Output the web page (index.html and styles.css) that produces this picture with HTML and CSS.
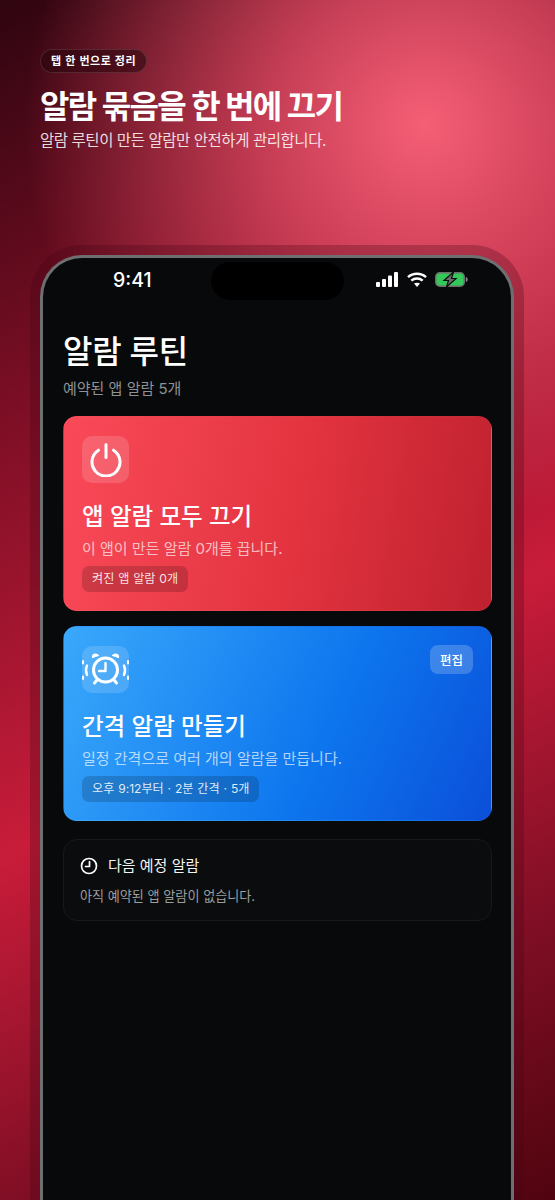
FILE: index.html
```html
<!DOCTYPE html>
<html lang="ko">
<head>
  <meta charset="UTF-8">
  <meta name="viewport" content="width=device-width, initial-scale=1.0">
  <title>알람 루틴</title>
  <link rel="stylesheet" href="styles.css">
</head>
<body>

<div class="screen">
  <header class="promo">
    <span class="promo-pill">탭 한 번으로 정리</span>
    <h1>알람 묶음을 한 번에 끄기</h1>
    <p>알람 루틴이 만든 알람만 안전하게 관리합니다.</p>
  </header>

  <div class="phone">
    <div class="island"></div>

    <div class="status-bar">
      <span class="time">9:41</span>
      <div class="status-icons">
        <svg width="23" height="15" viewBox="0 0 23 15" fill="#fff">
          <rect x="0" y="10" width="4" height="5" rx="1"/>
          <rect x="6" y="7" width="4" height="8" rx="1"/>
          <rect x="12" y="3.500" width="4" height="11.500" rx="1"/>
          <rect x="18" y="0" width="4" height="15" rx="1"/>
        </svg>
        <svg width="20" height="15" viewBox="0 0 20 15" fill="none" stroke="#fff" stroke-width="2.400">
          <path d="M1 5.200C6 .6 14 .6 19 5.200"/>
          <path d="M4.300 8.600C7.500 5.800 12.500 5.800 15.700 8.600"/>
          <path d="M10 15l-3-3.400c1.800-1.300 4.200-1.300 6 0z" fill="#fff" stroke="none"/>
        </svg>
        <svg width="33" height="15" viewBox="0 0 33 15">
          <rect x=".75" y=".75" width="28.500" height="13.500" rx="4" fill="#34c759" stroke="#6a6f6b" stroke-width="1.500"/>
          <path d="M30.800 5v5c1.300-.3 1.900-1.300 1.900-2.500s-.6-2.200-1.900-2.500z" fill="#8a8d8b"/>
          <path d="M18.500 0 9 8.500h4.500L11.500 15l9.500-8.500h-4.500z" fill="#6a6d6b" stroke="#0a0c0d" stroke-width="1.200"/>
        </svg>
      </div>
    </div>

    <div class="app">
      <h2 class="app-title">알람 루틴</h2>
      <p class="app-sub">예약된 앱 알람 5개</p>

      <section class="card card-red">
        <div class="card-top">
          <div class="card-icon">
            <svg width="34" height="34" viewBox="0 0 34 34" fill="none" stroke="#fff" stroke-width="3" stroke-linecap="round">
              <path d="M9.500 7.200a14 14 0 1 0 15 0"/>
              <path d="M17 1.500v13"/>
            </svg>
          </div>
        </div>
        <h3>앱 알람 모두 끄기</h3>
        <p>이 앱이 만든 알람 0개를 끕니다.</p>
        <span class="card-tag">켜진 앱 알람 0개</span>
      </section>

      <section class="card card-blue">
        <div class="card-top">
          <div class="card-icon">
            <svg width="47" height="47" viewBox="0 0 47 47" fill="none" stroke="#fff" stroke-width="3" stroke-linecap="round" stroke-linejoin="round">
              <circle cx="23.500" cy="24" r="12"/>
              <path d="M23.500 17v8h-6.500" stroke-width="2.400"/>
              <path d="M10.500 11.500c-.4-2 1-3.500 3-3.500 1.300 0 2.300.5 3 1.500z" fill="#fff" stroke-width="1.200"/>
              <path d="M36.500 11.500c.4-2-1-3.500-3-3.500-1.300 0-2.300.5-3 1.500z" fill="#fff" stroke-width="1.200"/>
              <path d="M15 34l-2.500 3M32 34l2.500 3"/>
              <path d="M5 19.500c-1.300 3-1.300 6.500 0 9.500M42 19.500c1.300 3 1.300 6.500 0 9.500" stroke-width="2.400"/>
              <path d="M1 15v2.500M1 30.500V33M46 15v2.500M46 30.500V33" stroke-width="2"/>
            </svg>
          </div>
          <button class="edit-btn">편집</button>
        </div>
        <h3>간격 알람 만들기</h3>
        <p>일정 간격으로 여러 개의 알람을 만듭니다.</p>
        <span class="card-tag">오후 9:12부터 · 2분 간격 · 5개</span>
      </section>

      <section class="next">
        <div class="next-head">
          <svg width="18" height="18" viewBox="0 0 18 18" fill="none" stroke="#fff" stroke-width="1.700" stroke-linecap="round" stroke-linejoin="round">
            <circle cx="9" cy="9" r="7.500"/>
            <path d="M9.500 4.500v5h-4"/>
          </svg>
          <span>다음 예정 알람</span>
        </div>
        <p>아직 예약된 앱 알람이 없습니다.</p>
      </section>
    </div>
  </div>
</div>

</body>
</html>
```

FILE: styles.css
```css
* {
  box-sizing: border-box;
}

html, body {
  margin: 0;
  padding: 0;
}

body {
  font-family: Inter, "Noto Sans CJK KR", "Noto Sans", sans-serif;
  background-color: #7a0a1f;
}

.screen {
  width: 555px;
  height: 1200px;
  overflow: hidden;
  padding: 49px 0 0 40px;
  background:
    radial-gradient(circle 400px at 425px 125px, rgba(245, 95, 118, 1) 0%, rgba(235, 80, 105, 0.72) 40%, rgba(200, 40, 70, 0) 100%),
    linear-gradient(152deg, #2f0510 0%, #7a0e24 27%, #c81c3a 57.500%, #820f25 80%, #50040f 100%);
}

.promo {
  display: flex;
  flex-direction: column;
  align-items: flex-start;
}

.promo-pill {
  height: 24px;
  padding: 0 10px;
  border: 1px solid rgba(255, 255, 255, 0.12);
  border-radius: 12px;
  background-color: rgba(40, 5, 12, 0.55);
  color: #fff;
  font-family: "Noto Sans CJK KR", sans-serif;
  font-size: 11px;
  font-weight: 700;
  line-height: 21px;
  letter-spacing: 0.500px;
}

.promo h1 {
  margin: 11px 0 0;
  color: #fff;
  font-size: 32px;
  font-weight: 700;
  line-height: 46px;
  letter-spacing: -1.600px;
}

.promo p {
  margin: -1px 0 0;
  color: rgba(255, 255, 255, 0.85);
  font-size: 15.500px;
  line-height: 24px;
  letter-spacing: -0.450px;
}

.phone {
  position: relative;
  width: 474px;
  height: 1000px;
  margin-top: 102px;
  border: 3px solid #6d6f70;
  border-bottom: none;
  border-radius: 42px 42px 0 0;
  background-color: #07090b;
  box-shadow: 0 0 0 10px rgba(70, 5, 20, 0.28);
}

.island {
  position: absolute;
  top: 4px;
  left: 168px;
  width: 133px;
  height: 38px;
  border-radius: 19px;
  background-color: #000;
}

.status-bar {
  display: flex;
  justify-content: space-between;
  align-items: center;
  height: 40px;
  padding: 3px 43px 0 70px;
}

.time {
  color: #fff;
  font-size: 19.500px;
  font-weight: 500;
}

.status-icons {
  display: flex;
  align-items: center;
  gap: 8px;
}

.app {
  padding: 29px 19px 0 20px;
}

.app-title {
  margin: 0;
  color: #fff;
  font-size: 32px;
  font-weight: 500;
  line-height: 50px;
  letter-spacing: -0.300px;
}

.app-sub {
  margin: 0;
  color: #8f9294;
  font-size: 15px;
  line-height: 24px;
}

.card {
  height: 195px;
  padding: 19px 18px;
  border: 1px solid rgba(255, 255, 255, 0.04);
  border-radius: 14px;
}

.card-red {
  margin-top: 15px;
  background: linear-gradient(100deg, #fa4a59 0%, #e2333f 55%, #bf212f 100%);
}

.card-blue {
  margin-top: 15px;
  background: linear-gradient(115deg, #3aa8fb 0%, #0d76ee 60%, #0b4fd9 100%);
}

.card-top {
  display: flex;
  justify-content: space-between;
  align-items: flex-start;
}

.card-icon {
  display: flex;
  justify-content: center;
  align-items: center;
  width: 47px;
  height: 47px;
  border-radius: 10px;
  background-color: rgba(255, 255, 255, 0.15);
}

.card h3 {
  margin: 16px 0 0;
  color: #fff;
  font-size: 23.500px;
  font-weight: 500;
  line-height: 36px;
}

.card p {
  margin: 2px 0 0;
  color: rgba(255, 255, 255, 0.68);
  font-size: 15px;
  line-height: 24px;
}

.card-tag {
  display: inline-block;
  height: 26px;
  margin-top: 5px;
  padding: 0 10px;
  border-radius: 7px;
  background-color: rgba(0, 0, 0, 0.17);
  color: rgba(255, 255, 255, 0.88);
  font-size: 12.100px;
  line-height: 25px;
  word-spacing: 0.500px;
}

.edit-btn {
  height: 29px;
  margin-top: -1px;
  padding: 0 10px;
  border: none;
  border-radius: 8px;
  background-color: rgba(255, 255, 255, 0.2);
  color: #fff;
  font-family: inherit;
  font-size: 12.500px;
  font-weight: 500;
}

.next {
  height: 82px;
  margin-top: 18px;
  padding: 15px 16px;
  border: 1px solid #17191a;
  border-radius: 14px;
  background-color: #0b0c0d;
}

.next-head {
  display: flex;
  align-items: center;
  gap: 10px;
  color: #f2f2f2;
  font-size: 15px;
  line-height: 22px;
}

.next p {
  margin: 9px 0 0;
  color: #9c9e9f;
  font-size: 13.100px;
  line-height: 20px;
}
```
